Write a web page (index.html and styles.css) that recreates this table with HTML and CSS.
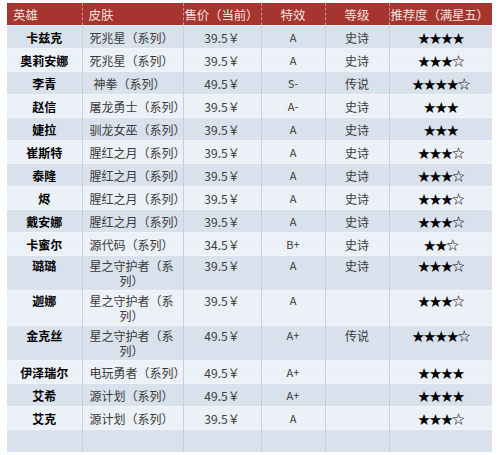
FILE: index.html
```html
<!DOCTYPE html>
<html lang="zh-CN">
<head>
<meta charset="utf-8">
<title>皮肤推荐</title>
<link rel="stylesheet" href="styles.css">
</head>
<body>
<table class="sheet">
  <colgroup>
    <col class="w-hero"><col class="w-skin"><col class="w-price"><col class="w-fx"><col class="w-grade"><col class="w-rate">
  </colgroup>
  <thead>
    <tr>
      <th class="h-left">英雄</th>
      <th class="h-left">皮肤</th>
      <th class="h-tight">售价（当前）</th>
      <th class="h-center">特效</th>
      <th class="h-center">等级</th>
      <th class="h-tight">推荐度（满星五）</th>
    </tr>
  </thead>
  <tbody>
    <tr><td class="hero">卡兹克</td><td class="skin">死兆星（系列）</td><td>39.5￥</td><td class="fx">A</td><td>史诗</td><td class="rate">★★★★</td></tr>
    <tr><td class="hero">奥莉安娜</td><td class="skin">死兆星（系列）</td><td>39.5￥</td><td class="fx">A</td><td>史诗</td><td class="rate">★★★☆</td></tr>
    <tr><td class="hero">李青</td><td class="skin indent">神拳（系列）</td><td>49.5￥</td><td class="fx">S-</td><td>传说</td><td class="rate">★★★★☆</td></tr>
    <tr><td class="hero">赵信</td><td class="skin">屠龙勇士（系列）</td><td>39.5￥</td><td class="fx">A-</td><td>史诗</td><td class="rate">★★★</td></tr>
    <tr><td class="hero">婕拉</td><td class="skin">驯龙女巫（系列）</td><td>39.5￥</td><td class="fx">A</td><td>史诗</td><td class="rate">★★★</td></tr>
    <tr><td class="hero">崔斯特</td><td class="skin">腥红之月（系列）</td><td>39.5￥</td><td class="fx">A</td><td>史诗</td><td class="rate">★★★☆</td></tr>
    <tr><td class="hero">泰隆</td><td class="skin">腥红之月（系列）</td><td>39.5￥</td><td class="fx">A</td><td>史诗</td><td class="rate">★★★☆</td></tr>
    <tr><td class="hero">烬</td><td class="skin">腥红之月（系列）</td><td>39.5￥</td><td class="fx">A</td><td>史诗</td><td class="rate">★★★☆</td></tr>
    <tr><td class="hero">戴安娜</td><td class="skin">腥红之月（系列）</td><td>39.5￥</td><td class="fx">A</td><td>史诗</td><td class="rate">★★★☆</td></tr>
    <tr><td class="hero">卡蜜尔</td><td class="skin">源代码（系列）</td><td>34.5￥</td><td class="fx">B+</td><td>史诗</td><td class="rate">★★☆</td></tr>
    <tr class="tall"><td class="hero">璐璐</td><td class="skin wrap">星之守护者（系列）</td><td>39.5￥</td><td class="fx">A</td><td>史诗</td><td class="rate">★★★☆</td></tr>
    <tr class="tall"><td class="hero">迦娜</td><td class="skin wrap">星之守护者（系列）</td><td>39.5￥</td><td class="fx">A</td><td></td><td class="rate">★★★☆</td></tr>
    <tr class="tall"><td class="hero">金克丝</td><td class="skin wrap">星之守护者（系列）</td><td>49.5￥</td><td class="fx">A+</td><td>传说</td><td class="rate">★★★★☆</td></tr>
    <tr><td class="hero">伊泽瑞尔</td><td class="skin">电玩勇者（系列）</td><td>49.5￥</td><td class="fx">A+</td><td></td><td class="rate">★★★★</td></tr>
    <tr><td class="hero">艾希</td><td class="skin">源计划（系列）</td><td>49.5￥</td><td class="fx">A+</td><td></td><td class="rate">★★★★</td></tr>
    <tr><td class="hero">艾克</td><td class="skin">源计划（系列）</td><td>39.5￥</td><td class="fx">A</td><td></td><td class="rate">★★★☆</td></tr>
    <tr><td class="hero">&nbsp;</td><td></td><td></td><td></td><td></td><td></td></tr>
  </tbody>
</table>
</body>
</html>
```
FILE: styles.css
```css
html, body {
  margin: 0;
  padding: 0;
  background: #ffffff;
}

body {
  font-family: "Noto Sans CJK SC", "Liberation Sans", sans-serif;
  overflow: hidden;
}

.sheet {
  margin: 3px 0 0 7px;
  width: 485px;
  border-collapse: collapse;
  table-layout: fixed;
}

.w-hero { width: 75px; }
.w-skin { width: 101px; }
.w-price { width: 78px; }
.w-fx { width: 64px; }
.w-grade { width: 64px; }
.w-rate { width: 103px; }

.sheet th {
  background: #a5352e;
  color: #f6e4e0;
  font-weight: normal;
  font-size: 12.5px;
  line-height: 15px;
  padding: 4px 1px 3px;
  border-left: 1px dashed rgba(255, 255, 255, 0.45);
  border-bottom: 1px solid #f3f5f8;
  white-space: nowrap;
}

.sheet th:first-child { border-left: none; }

.h-center { text-align: center; }

.sheet th.h-left { text-align: left; padding-left: 6px; }
.sheet th.h-tight { text-align: left; padding-left: 1px; padding-right: 0; letter-spacing: -0.2px; }

.sheet td {
  font-size: 12px;
  line-height: 15px;
  padding: 4px 2px 3px;
  vertical-align: top;
  text-align: center;
  color: #3a3a3a;
  border-left: 1px solid #c6cfda;
  border-top: 1px solid #f2f5f9;
  white-space: nowrap;
}

.sheet td:first-child { border-left: none; }

.sheet tbody tr:nth-child(odd) td { background: #d8e1ec; }
.sheet tbody tr:nth-child(even) td { background: #ecf0f7; }

.sheet tr.tall td {
  padding-top: 2px;
  padding-bottom: 2px;
}

.hero {
  font-weight: bold;
  font-size: 12px;
}

.sheet td.hero { color: #000000; }

.sheet td.skin {
  text-align: left;
  padding-left: 7px;
  padding-right: 0;
}

.sheet td.indent { padding-left: 11px; }

.sheet td.wrap {
  white-space: normal;
  text-align: center;
  padding-left: 6px;
  padding-right: 8px;
}

.sheet td.fx { font-size: 11px; }

.sheet td.rate {
  font-family: "Noto Sans CJK SC", sans-serif;
  font-size: 12.5px;
  line-height: 15px;
  letter-spacing: -1px;
  color: #000000;
}
```
